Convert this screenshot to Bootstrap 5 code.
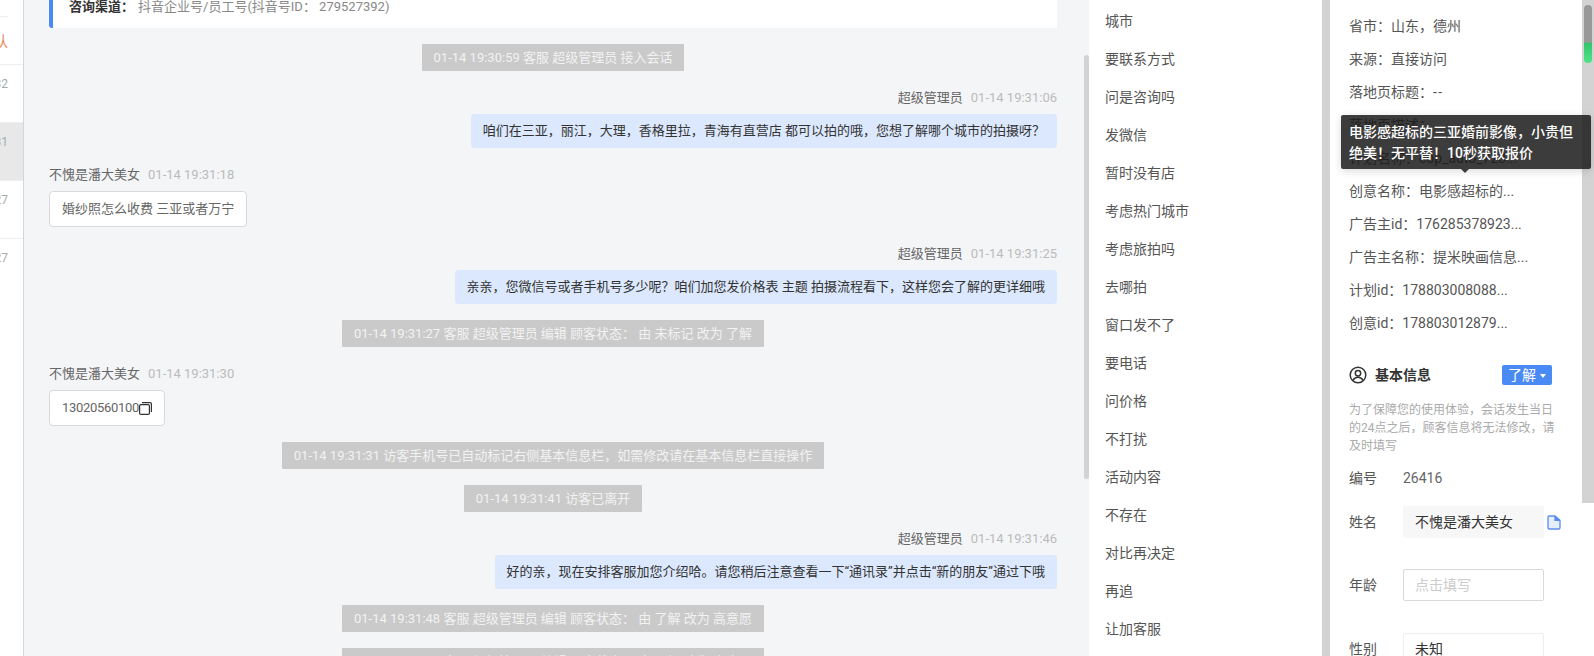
<!DOCTYPE html>
<html lang="zh-CN">
<head>
  <meta charset="UTF-8">
  <title>会话详情</title>
  <link href="https://cdn.jsdelivr.net/npm/bootstrap@5.3.0/dist/css/bootstrap.min.css" rel="stylesheet">
  <style>
    body { font-family: Roboto, "Noto Sans CJK SC", sans-serif; font-size: 14px; color: #555; background: #fff; font-variant-ligatures: none; }
    .page-root { height: 656px; }

    /* session list, almost scrolled out on the left */
    .session-col { width: 24px; border-right: 1px solid #d6d6d6; flex: none; }
    .session-row { height: 58px; border-bottom: 1px solid #eee; font-size: 12px; color: #aaa; white-space: nowrap; padding-top: 10px; padding-right: 15px; justify-content: flex-end; }
    .session-first { height: 17px; width: 8px; border-bottom: 1px solid #eee; }
    .session-tag { height: 48px; color: #e8825a; border-bottom: 1px solid #eee; font-size: 14px; padding-top: 14px; }
    .session-active { background: #e8e8e8; }

    /* chat */
    .chat-col { width: 1065px; background: #f4f5f7; flex: none; }
    .chat-flow { width: 1060px; padding: 0 27px 0 25px; gap: 16px; font-size: 13px; flex: none; }
    .chat-flow > * { flex-shrink: 0; }
    .channel-card { height: 28px; background: #fff; border-left: 4px solid #4a8af4; border-bottom-left-radius: 3px; padding-left: 16px; line-height: 14px; color: #888; }
    .channel-card b { color: #333; font-weight: 700; margin-right: 4px; }
    .sys-line { height: 27px; line-height: 27px; padding: 0 12px; background: #cacaca; color: #f2f2f2; border-radius: 1px; white-space: nowrap; }
    .who { line-height: 21px; margin-bottom: 6px; color: #666; white-space: nowrap; }
    .who span { color: #bbb; margin-left: 8px; }
    .bubble-in { height: 36px; line-height: 34px; padding: 0 12px; background: #fff; border: 1px solid #d9d9d9; border-radius: 4px; color: #666; white-space: nowrap; }
    .bubble-out { height: 34px; line-height: 34px; padding: 0 12px; background: #dbe8fd; border-radius: 4px; color: #333; white-space: nowrap; }
    .phone-num { letter-spacing: -.3px; }
    .chat-thumb { width: 5px; height: 424px; margin-top: 55px; background: #d2d2d2; border-radius: 3px; flex: none; }

    /* quick tags */
    .tag-col { width: 233px; flex: none; padding-top: 2px; }
    .tag-col .list-group-item { height: 38px; line-height: 38px; padding: 0 16px; border: 0; color: #555; }

    /* customer info */
    .info-col { width: 260px; border-left: 8px solid #d3d3d3; padding: 10px 0 0 19px; flex: none; }
    .ad-line { line-height: 33px; color: #555; white-space: nowrap; }
    .dash-pair { letter-spacing: 1.5px; }
    .info-head { height: 20px; margin-top: 25px; width: 203px; }
    .info-head b { color: #333; margin-left: 8px; font-weight: 700; }
    .status-btn { height: 20px; width: 50px; padding: 0; font-size: 14px; line-height: 20px; background: #4a8af4; border: 0; border-radius: 2px; color: #fff; }
    .status-btn::after { border-top-width: 4px; border-left-width: 3px; border-right-width: 3px; margin-left: 4px; vertical-align: 2px; }
    .help-note { width: 208px; margin-top: 16px; font-size: 12px; line-height: 18px; color: #aaa; }
    .field-label { width: 54px; flex: none; color: #555; }
    .field-num { height: 20px; line-height: 20px; margin-top: 13px; color: #666; }
    .field-box { width: 141px; height: 32px; padding: 0 11px; font-size: 14px; line-height: 30px; border: 1px solid #d9d9d9; border-radius: 2px; color: #333; }
    .field-box::placeholder { color: #ccc; }
    .box-filled { background: #f7f7f7; border-color: #f7f7f7; }
    .box-plain { border-color: #eee; }
    .gap-name { margin-top: 18px; }
    .gap-age { margin-top: 31px; }
    .gap-sex { margin-top: 32px; }
    .copy-doc { margin-left: 3px; }

    .info-track { width: 12px; height: 503px; background: #d3d3d3; padding: 5px 2px 0; flex: none; }
    .info-thumb { height: 58px; border-radius: 4px; background: linear-gradient(#999 0, #999 64%, #35c46c 66%, #4fe587 100%); }

    .hover-tip { left: 1341px; top: 115px; width: 250px; margin: 0; padding: 0; --bs-tooltip-opacity: 1; --bs-tooltip-max-width: 250px; }
    .hover-tip .tooltip-inner { width: 250px; padding: 7px 8px 6px; background: rgba(26, 26, 26, .85); border-radius: 2px; color: #fff; font: 500 14px/20.5px Roboto, "Noto Sans CJK SC", sans-serif; text-align: left; box-shadow: 0 2px 8px rgba(0, 0, 0, .15); }
    .hover-tip .tooltip-arrow { position: absolute; left: 120px; bottom: -4px; width: 8px; height: 4px; }
    .hover-tip .tooltip-arrow::before { position: absolute; top: 0; left: 0; border-style: solid; border-color: #3c3c3c transparent transparent; border-width: 4px 4px 0; }
  </style>
</head>
<body>
<div class="page-root d-flex position-relative overflow-hidden">

  <div class="session-col overflow-hidden">
    <div class="session-first"></div>
    <div class="session-row session-tag d-flex">确认</div>
    <div class="session-row d-flex">01-14 19:32</div>
    <div class="session-row session-active d-flex">01-14 19:31</div>
    <div class="session-row d-flex">01-14 19:27</div>
    <div class="session-row d-flex border-0">01-14 19:27</div>
  </div>

  <div class="chat-col d-flex overflow-hidden">
    <div class="chat-flow d-flex flex-column">
      <div class="channel-card"><b>咨询渠道：</b>抖音企业号/员工号(抖音号ID： 279527392)</div>

      <div class="align-self-center sys-line">01-14 19:30:59 客服 超级管理员 接入会话</div>

      <div class="text-end">
        <div class="who">超级管理员<span>01-14 19:31:06</span></div>
        <div class="d-flex justify-content-end"><div class="bubble-out">咱们在三亚，丽江，大理，香格里拉，青海有直营店 都可以拍的哦，您想了解哪个城市的拍摄呀？</div></div>
      </div>

      <div>
        <div class="who">不愧是潘大美女<span>01-14 19:31:18</span></div>
        <div class="d-flex"><div class="bubble-in">婚纱照怎么收费 三亚或者万宁</div></div>
      </div>

      <div class="text-end">
        <div class="who">超级管理员<span>01-14 19:31:25</span></div>
        <div class="d-flex justify-content-end"><div class="bubble-out">亲亲，您微信号或者手机号多少呢？咱们加您发价格表 主题 拍摄流程看下，这样您会了解的更详细哦</div></div>
      </div>

      <div class="align-self-center sys-line">01-14 19:31:27 客服 超级管理员 编辑 顾客状态： 由 未标记 改为 了解</div>

      <div>
        <div class="who">不愧是潘大美女<span>01-14 19:31:30</span></div>
        <div class="d-flex">
          <div class="bubble-in d-flex align-items-center"><span class="phone-num">13020560100</span>
            <svg width="13" height="13" viewBox="0 0 13 13" fill="none" stroke="#333" stroke-width="1.2"><rect x="0.6" y="2.6" width="9.8" height="9.8" rx="1.2"/><path d="M3 .6h8a1.4 1.4 0 0 1 1.4 1.4v8"/></svg>
          </div>
        </div>
      </div>

      <div class="align-self-center sys-line">01-14 19:31:31 访客手机号已自动标记右侧基本信息栏，如需修改请在基本信息栏直接操作</div>
      <div class="align-self-center sys-line">01-14 19:31:41 访客已离开</div>

      <div class="text-end">
        <div class="who">超级管理员<span>01-14 19:31:46</span></div>
        <div class="d-flex justify-content-end"><div class="bubble-out">好的亲，现在安排客服加您介绍哈。请您稍后注意查看一下“通讯录”并点击“新的朋友”通过下哦</div></div>
      </div>

      <div class="align-self-center sys-line">01-14 19:31:48 客服 超级管理员 编辑 顾客状态： 由 了解 改为 高意愿</div>
      <div class="align-self-center sys-line">01-14 19:31:52 客服 超级管理员 编辑 顾客状态： 由 了解 改为 高意愿</div>
    </div>
    <div class="chat-thumb"></div>
  </div>

  <div class="tag-col">
    <ul class="list-group list-group-flush">
      <li class="list-group-item">城市</li>
      <li class="list-group-item">要联系方式</li>
      <li class="list-group-item">问是咨询吗</li>
      <li class="list-group-item">发微信</li>
      <li class="list-group-item">暂时没有店</li>
      <li class="list-group-item">考虑热门城市</li>
      <li class="list-group-item">考虑旅拍吗</li>
      <li class="list-group-item">去哪拍</li>
      <li class="list-group-item">窗口发不了</li>
      <li class="list-group-item">要电话</li>
      <li class="list-group-item">问价格</li>
      <li class="list-group-item">不打扰</li>
      <li class="list-group-item">活动内容</li>
      <li class="list-group-item">不存在</li>
      <li class="list-group-item">对比再决定</li>
      <li class="list-group-item">再追</li>
      <li class="list-group-item">让加客服</li>
    </ul>
  </div>

  <div class="info-col overflow-hidden">
    <div class="ad-line">省市：山东，德州</div>
    <div class="ad-line">来源：直接访问</div>
    <div class="ad-line">落地页标题：<span class="dash-pair">--</span></div>
    <div class="ad-line">落地页描述：</div>
    <div class="ad-line">计划名称：cop_auto_723...</div>
    <div class="ad-line">创意名称：电影感超标的...</div>
    <div class="ad-line">广告主id：176285378923...</div>
    <div class="ad-line">广告主名称：提米映画信息...</div>
    <div class="ad-line">计划id：178803008088...</div>
    <div class="ad-line">创意id：178803012879...</div>

    <div class="info-head d-flex align-items-center justify-content-between">
      <div class="d-flex align-items-center">
        <svg width="18" height="18" viewBox="0 0 18 18" fill="none" stroke="#333" stroke-width="1.5"><circle cx="9" cy="9" r="7.8"/><circle cx="9" cy="7.2" r="2.7"/><path d="M4 14.4c1-2.2 2.8-3.1 5-3.1s4 .9 5 3.1"/></svg>
        <b>基本信息</b>
      </div>
      <button type="button" class="btn status-btn dropdown-toggle">了解</button>
    </div>

    <div class="help-note">为了保障您的使用体验，会话发生当日的24点之后，顾客信息将无法修改，请及时填写</div>

    <div class="field-num d-flex"><div class="field-label">编号</div><div>26416</div></div>

    <div class="gap-name d-flex align-items-center">
      <div class="field-label">姓名</div>
      <div class="field-box box-filled">不愧是潘大美女</div>
      <svg class="copy-doc" width="14" height="15" viewBox="0 0 14 15" fill="#e6eefc" stroke="#5b8def" stroke-width="1.3"><path d="M1 2.2a1.2 1.2 0 0 1 1.2-1.2H8l5 4.4v7.4a1.2 1.2 0 0 1-1.2 1.2H2.2A1.2 1.2 0 0 1 1 12.8z"/><path d="M8 1v4.4h5" fill="#5b8def"/></svg>
    </div>

    <div class="gap-age d-flex align-items-center">
      <label class="field-label" for="ageInput">年龄</label>
      <input class="field-box" id="ageInput" type="text" placeholder="点击填写">
    </div>

    <div class="gap-sex d-flex align-items-center">
      <div class="field-label">性别</div>
      <div class="field-box box-plain">未知</div>
    </div>
  </div>

  <div class="info-track"><div class="info-thumb"></div></div>

  <div class="tooltip bs-tooltip-top show hover-tip position-absolute" role="tooltip">
    <div class="tooltip-inner">电影感超标的三亚婚前影像，小贵但绝美！无平替！10秒获取报价</div>
    <div class="tooltip-arrow"></div>
  </div>
</div>
<script src="https://cdn.jsdelivr.net/npm/bootstrap@5.3.0/dist/js/bootstrap.bundle.min.js"></script>
</body>
</html>
